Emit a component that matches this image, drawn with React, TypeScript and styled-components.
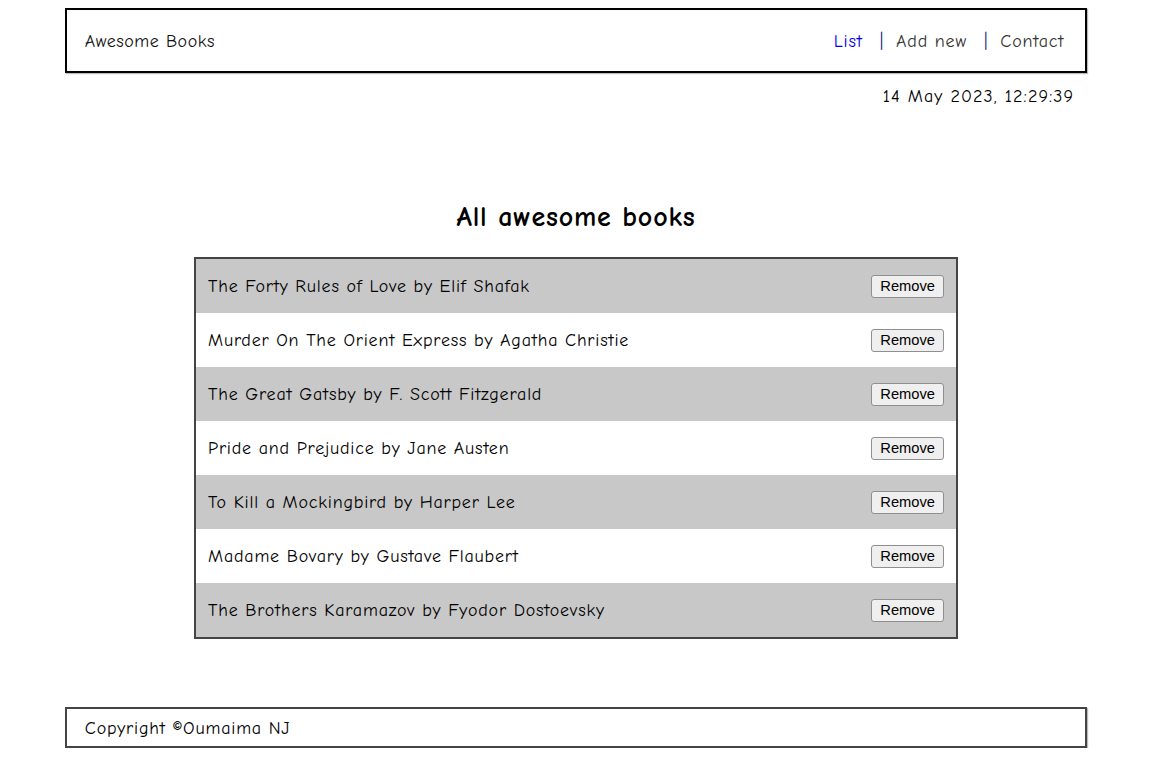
import React from "react";
import styled, { createGlobalStyle } from "styled-components";

const Global = createGlobalStyle`
  body {
    margin: 8px;
    background: #fff;
    font-family: "Comic Sans MS", "Comic Neue", "DejaVu Sans", sans-serif;
    color: #000;
    letter-spacing: 0.05em;
  }
`;

const Header = styled.header`
  width: 90%;
  margin: 0 auto;
  box-sizing: border-box;
  height: 65px;
  border: 2px solid #000;
  box-shadow: 1px 1px 1px #bbb;
  display: flex;
  align-items: center;
  justify-content: space-between;
  padding: 2px 21px 0 18px;
  font-size: 18px;
`;

const Brand = styled.span`
  color: #111;
  letter-spacing: 0.03em;
`;

const Nav = styled.nav`
  display: flex;
  align-items: center;
`;

const NavLink = styled.a<{ $active?: boolean }>`
  color: ${(p) => (p.$active ? "#0000ee" : "#333")};
  text-decoration: none;
  cursor: pointer;
`;

const Sep = styled.span`
  color: #102a80;
  margin: 0 12px 0 17px;
`;

const DateLine = styled.div`
  width: 90%;
  margin: 13px auto 0;
  box-sizing: border-box;
  padding-right: 13px;
  text-align: right;
  font-size: 18px;
  letter-spacing: 0.06em;
`;

const Main = styled.main`
  display: flex;
  flex-direction: column;
  align-items: center;
  margin-top: 94px;
`;

const Title = styled.h1`
  margin: 0 0 24px;
  font-size: 28px;
  font-weight: bold;
`;

const List = styled.ul`
  list-style: none;
  margin: 0;
  padding: 0;
  width: 764px;
  box-sizing: border-box;
  border: 2px solid #444;
`;

const Row = styled.li<{ $odd: boolean }>`
  height: 54px;
  display: flex;
  align-items: center;
  justify-content: space-between;
  padding: 0 12px 0 12px;
  background: ${(p) => (p.$odd ? "#c8c8c8" : "#fff")};
  font-size: 18px;
`;

const RemoveBtn = styled.button`
  font-family: Arial, "Liberation Sans", sans-serif;
  font-size: 14.7px;
  letter-spacing: 0;
  background: #efefef;
  border: 1px solid #8f8f8f;
  border-radius: 3px;
  padding: 0 8px;
  height: 23px;
  color: #000;
  cursor: pointer;
`;

const Footer = styled.footer`
  width: 90%;
  margin: 68px auto 0;
  box-sizing: border-box;
  height: 41px;
  border: 2px solid #444;
  box-shadow: 1px 1px 1px #bbb;
  display: flex;
  align-items: center;
  padding: 2px 18px 0;
  font-size: 18px;
`;

const books = [
  "The Forty Rules of Love by Elif Shafak",
  "Murder On The Orient Express by Agatha Christie",
  "The Great Gatsby by F. Scott Fitzgerald",
  "Pride and Prejudice by Jane Austen",
  "To Kill a Mockingbird by Harper Lee",
  "Madame Bovary by Gustave Flaubert",
  "The Brothers Karamazov by Fyodor Dostoevsky",
];

export default function App() {
  return (
    <>
      <Global />
      <Header>
        <Brand>Awesome Books</Brand>
        <Nav>
          <NavLink $active>List</NavLink>
          <Sep>|</Sep>
          <NavLink>Add new</NavLink>
          <Sep>|</Sep>
          <NavLink>Contact</NavLink>
        </Nav>
      </Header>
      <DateLine>14 May 2023, 12:29:39</DateLine>
      <Main>
        <Title>All awesome books</Title>
        <List>
          {books.map((b, i) => (
            <Row key={b} $odd={i % 2 === 0}>
              <span>{b}</span>
              <RemoveBtn>Remove</RemoveBtn>
            </Row>
          ))}
        </List>
      </Main>
      <Footer>Copyright ©Oumaima NJ</Footer>
    </>
  );
}
